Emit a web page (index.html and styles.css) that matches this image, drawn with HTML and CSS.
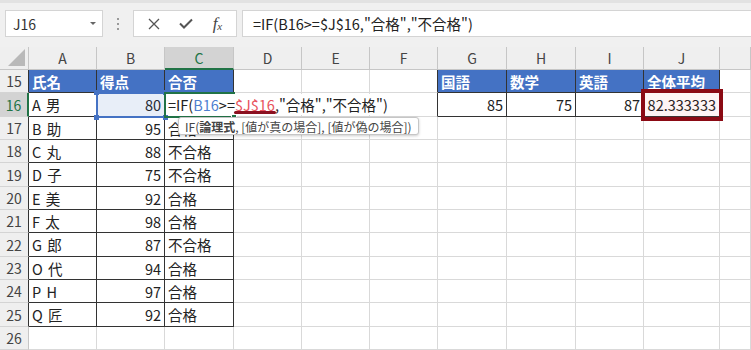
FILE: index.html
```html
<!DOCTYPE html>
<html lang="ja">
<head>
    <meta charset="UTF-8">
    <meta name="viewport" content="width=device-width, initial-scale=1.0">
    <title>IF関数 - 合否判定</title>
    <link rel="stylesheet" href="styles.css">
</head>
<body>
    <!-- 数式バー -->
    <div class="formula-bar">
        <div class="name-box">
            <span>J16</span>
            <span class="arrow"></span>
        </div>
        <div class="grip"><i></i><i></i><i></i></div>
        <div class="fx-buttons">
            <svg width="12" height="12" viewBox="0 0 12 12"><path d="M1 1 L11 11 M11 1 L1 11" stroke="#555" stroke-width="1.3" fill="none"/></svg>
            <svg width="14" height="11" viewBox="0 0 14 11"><path d="M1 5.5 L5 9.5 L13 1.5" stroke="#555" stroke-width="2" fill="none"/></svg>
            <span class="fx">f<sub>x</sub></span>
        </div>
        <div class="formula-input">=IF(B16&gt;=$J$16,"合格","不合格")</div>
    </div>

    <!-- シート -->
    <div class="sheet">
        <div class="corner"><span></span></div>
        <div class="ch">A</div>
        <div class="ch">B</div>
        <div class="ch sel">C</div>
        <div class="ch">D</div>
        <div class="ch">E</div>
        <div class="ch">F</div>
        <div class="ch">G</div>
        <div class="ch">H</div>
        <div class="ch">I</div>
        <div class="ch">J</div>
        <div class="ch"></div>

        <div class="rh bl">15</div>
        <div class="c t h">氏名</div>
        <div class="c t h">得点</div>
        <div class="c t h">合否</div>
        <div class="c"></div>
        <div class="c"></div>
        <div class="c bl"></div>
        <div class="c t h">国語</div>
        <div class="c t h">数学</div>
        <div class="c t h">英語</div>
        <div class="c t h">全体平均</div>
        <div class="c"></div>

        <div class="rh sel">16</div>
        <div class="c t">A 男</div>
        <div class="c t n">80</div>
        <div class="c t"></div>
        <div class="c"></div>
        <div class="c"></div>
        <div class="c bl"></div>
        <div class="c t n">85</div>
        <div class="c t n">75</div>
        <div class="c t n">87</div>
        <div class="c t n">82.333333</div>
        <div class="c"></div>

        <div class="rh bl">17</div>
        <div class="c t">B 助</div>
        <div class="c t n">95</div>
        <div class="c t">合格</div>
        <div class="c"></div><div class="c"></div><div class="c"></div><div class="c"></div><div class="c"></div><div class="c"></div><div class="c"></div><div class="c"></div>

        <div class="rh bl">18</div>
        <div class="c t">C 丸</div>
        <div class="c t n">88</div>
        <div class="c t">不合格</div>
        <div class="c"></div><div class="c"></div><div class="c"></div><div class="c"></div><div class="c"></div><div class="c"></div><div class="c"></div><div class="c"></div>

        <div class="rh bl">19</div>
        <div class="c t">D 子</div>
        <div class="c t n">75</div>
        <div class="c t">不合格</div>
        <div class="c"></div><div class="c"></div><div class="c"></div><div class="c"></div><div class="c"></div><div class="c"></div><div class="c"></div><div class="c"></div>

        <div class="rh bl">20</div>
        <div class="c t">E 美</div>
        <div class="c t n">92</div>
        <div class="c t">合格</div>
        <div class="c"></div><div class="c"></div><div class="c"></div><div class="c"></div><div class="c"></div><div class="c"></div><div class="c"></div><div class="c"></div>

        <div class="rh bl">21</div>
        <div class="c t">F 太</div>
        <div class="c t n">98</div>
        <div class="c t">合格</div>
        <div class="c"></div><div class="c"></div><div class="c"></div><div class="c"></div><div class="c"></div><div class="c"></div><div class="c"></div><div class="c"></div>

        <div class="rh bl">22</div>
        <div class="c t">G 郎</div>
        <div class="c t n">87</div>
        <div class="c t">不合格</div>
        <div class="c"></div><div class="c"></div><div class="c"></div><div class="c"></div><div class="c"></div><div class="c"></div><div class="c"></div><div class="c"></div>

        <div class="rh bl">23</div>
        <div class="c t">O 代</div>
        <div class="c t n">94</div>
        <div class="c t">合格</div>
        <div class="c"></div><div class="c"></div><div class="c"></div><div class="c"></div><div class="c"></div><div class="c"></div><div class="c"></div><div class="c"></div>

        <div class="rh bl">24</div>
        <div class="c t">P H</div>
        <div class="c t n">97</div>
        <div class="c t">合格</div>
        <div class="c"></div><div class="c"></div><div class="c"></div><div class="c"></div><div class="c"></div><div class="c"></div><div class="c"></div><div class="c"></div>

        <div class="rh bl">25</div>
        <div class="c t">Q 匠</div>
        <div class="c t n">92</div>
        <div class="c t">合格</div>
        <div class="c"></div><div class="c"></div><div class="c"></div><div class="c"></div><div class="c"></div><div class="c"></div><div class="c"></div><div class="c"></div>

        <div class="rh">26</div>
        <div class="c"></div><div class="c"></div><div class="c"></div><div class="c"></div><div class="c"></div><div class="c"></div><div class="c"></div><div class="c"></div><div class="c"></div><div class="c"></div><div class="c"></div>

        <!-- 参照セル・編集中セル -->
        <div class="ref-box"><i class="hd tl"></i><i class="hd tr"></i><i class="hd bl2"></i><i class="hd br"></i></div>
        <div class="active-cell"></div>
        <div class="cell-editor">=IF(<span class="ref-b">B16</span>&gt;=<span class="ref-j">$J$16</span>,"合格","不合格")</div>
        <div class="fill-handle"></div>
        <div class="tooltip">IF(<b>論理式</b>, [値が真の場合], [値が偽の場合])</div>
        <div class="mark"></div>
    </div>
</body>
</html>
```

FILE: styles.css
```css
* {
    box-sizing: border-box;
}

body {
    margin: 0;
    width: 751px;
    height: 350px;
    overflow: hidden;
    background: #fff;
    font-family: "Noto Sans CJK JP", "Noto Sans", sans-serif;
    color: #222;
}

/* 数式バー */
.formula-bar {
    display: flex;
    height: 47px;
    padding: 7px 0 10px 5px;
    background: #f0f0f0;
    border-top: 3px solid #e2e2e2;
}

.name-box {
    width: 98px;
    height: 27px;
    display: flex;
    align-items: center;
    justify-content: space-between;
    padding: 0 6px 0 7px;
    background: #fff;
    border: 1px solid #d4d4d4;
    font-size: 14px;
    color: #333;
}

.name-box .arrow {
    width: 0;
    height: 0;
    border-left: 3px solid transparent;
    border-right: 3px solid transparent;
    border-top: 3px solid #666;
}

.grip {
    width: 30px;
    display: flex;
    flex-direction: column;
    align-items: center;
    justify-content: center;
    gap: 3px;
}

.grip i {
    width: 2px;
    height: 2px;
    background: #9a9a9a;
}

.fx-buttons {
    width: 104px;
    height: 27px;
    margin-right: 5px;
    display: flex;
    align-items: center;
    justify-content: space-around;
    padding: 0 4px;
    background: #fff;
    border: 1px solid #d4d4d4;
}

.fx {
    font-family: "Liberation Serif", serif;
    font-style: italic;
    font-size: 17px;
    color: #444;
    line-height: 1;
}

.fx sub {
    font-size: 11px;
    vertical-align: -1px;
}

.formula-input {
    flex: 1;
    height: 27px;
    display: flex;
    align-items: center;
    padding-left: 10px;
    background: #fff;
    border: 1px solid #d4d4d4;
    border-right: none;
    font-size: 14.5px;
    white-space: nowrap;
}

/* シート */
.sheet {
    position: relative;
    display: grid;
    grid-template-columns: 29px 68px 68px 69px 68px 68px 68px 69px 69px 68px 76px 31px;
    grid-template-rows: 23px 23px 24px 23px 23px 24px 23px 23px 24px 23px 23px 24px 23px;
    font-size: 14.5px;
}

.corner {
    position: relative;
    background: #efefef;
    border-right: 1px solid #c6c6c6;
    border-bottom: 1px solid #c6c6c6;
}

.corner span {
    position: absolute;
    right: 3px;
    bottom: 3px;
    width: 0;
    height: 0;
    border-left: 17px solid transparent;
    border-bottom: 17px solid #b9b9b9;
}

.ch {
    display: flex;
    align-items: center;
    justify-content: center;
    background: #efefef;
    border-right: 1px solid #c6c6c6;
    border-bottom: 1px solid #c6c6c6;
    font-size: 14px;
    color: #444;
}

.ch.sel {
    background: #d3d3d3;
    color: #217346;
    border-bottom: 2px solid #217346;
}

.rh {
    display: flex;
    align-items: center;
    justify-content: center;
    background: #efefef;
    border-right: 1px solid #c6c6c6;
    border-bottom: 1px solid #d4d4d4;
    font-size: 14px;
    color: #444;
}

.rh.sel {
    background: #d3d3d3;
    color: #217346;
    border-right: 2px solid #217346;
}

.c {
    display: flex;
    align-items: center;
    padding: 0 3px;
    border-right: 1px solid #d9d9d9;
    border-bottom: 1px solid #d9d9d9;
    white-space: nowrap;
    word-spacing: 2px;
}

.n {
    justify-content: flex-end;
}

.t {
    border-right-color: #333;
    border-bottom-color: #333;
}

.bl {
    border-right-color: #333;
}

.h {
    background: #4472c4;
    color: #fff;
    font-weight: bold;
}

/* 参照範囲 B16 */
.ref-box {
    position: absolute;
    left: 96px;
    top: 45px;
    width: 70px;
    height: 26px;
    border: 2px solid #4472c4;
    background: rgba(68, 114, 196, 0.12);
}

.hd {
    position: absolute;
    width: 5px;
    height: 5px;
    background: #4472c4;
}

.hd.tl { left: -4px; top: -4px; }
.hd.tr { right: -4px; top: -4px; }
.hd.bl2 { left: -4px; bottom: -4px; }
.hd.br { right: -4px; bottom: -4px; }

/* 編集中セル C16 */
.active-cell {
    position: absolute;
    left: 164px;
    top: 45px;
    width: 71px;
    height: 26px;
    border: 2px solid #217346;
}

.cell-editor {
    position: absolute;
    left: 166px;
    top: 47px;
    height: 21px;
    width: 218px;
    display: flex;
    align-items: center;
    padding-left: 2px;
    background: #fff;
    font-size: 14.5px;
    white-space: nowrap;
}

.ref-b {
    color: #4e7fd0;
}

.ref-j {
    position: relative;
    color: #e8525c;
}

.ref-j::after {
    content: '';
    position: absolute;
    left: -1px;
    right: -1px;
    bottom: 1px;
    height: 3px;
    border-radius: 2px;
    background: #8b1020;
}

.fill-handle {
    position: absolute;
    left: 231px;
    top: 67px;
    width: 6px;
    height: 6px;
    background: #217346;
    border: 1px solid #fff;
}

.tooltip {
    position: absolute;
    left: 178px;
    top: 70px;
    height: 18px;
    display: flex;
    align-items: center;
    padding: 0 6px;
    background: #fff;
    border: 1px solid #c6c6c6;
    border-radius: 3px;
    box-shadow: 0 1px 3px rgba(0, 0, 0, 0.2);
    font-size: 12px;
    color: #444;
    white-space: nowrap;
}

/* 全体平均の強調枠 */
.mark {
    position: absolute;
    left: 641px;
    top: 42px;
    width: 82px;
    height: 32px;
    border: 4px solid #8b0a14;
    background: rgba(220, 60, 60, 0.06);
}
```
